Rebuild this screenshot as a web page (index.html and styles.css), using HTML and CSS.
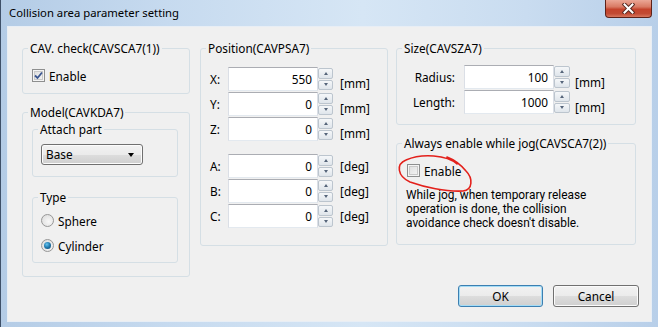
FILE: index.html
```html
<!DOCTYPE html>
<html lang="en">

<head>
    <meta charset="UTF-8">
    <title>Collision area parameter setting</title>
    <link rel="stylesheet" href="styles.css">
</head>

<body>
    <div class="window">
        <div class="titlebar">
            <span class="title">Collision area parameter setting</span>
            <div class="close-btn">
                <svg width="13" height="11" viewBox="0 0 13 11">
                    <path d="M2.5 1.5 L10.5 9.5 M10.5 1.5 L2.5 9.5" stroke="#5a2a22" stroke-width="4" stroke-linecap="square"/>
                    <path d="M2.5 1.5 L10.5 9.5 M10.5 1.5 L2.5 9.5" stroke="#ffffff" stroke-width="2" stroke-linecap="square"/>
                </svg>
            </div>
        </div>

        <div class="frame">
            <div class="client">
                <div class="columns">
                    <div class="col col-left">
                        <fieldset class="group group-cav">
                            <legend>CAV. check(CAVSCA7(1))</legend>
                            <label class="check">
                                <span class="checkbox">
                                    <svg width="9" height="9" viewBox="0 0 9 9">
                                        <path d="M1 4.5 L3.5 7 L8 1.5" fill="none" stroke="#3b5690" stroke-width="1.8"/>
                                    </svg>
                                </span>
                                Enable
                            </label>
                        </fieldset>

                        <fieldset class="group group-model">
                            <legend>Model(CAVKDA7)</legend>
                            <fieldset class="group group-attach">
                                <legend>Attach part</legend>
                                <div class="combo">Base<span class="combo-arrow"></span></div>
                            </fieldset>
                            <fieldset class="group group-type">
                                <legend>Type</legend>
                                <label class="radio-row"><span class="radio"></span>Sphere</label>
                                <label class="radio-row"><span class="radio checked"></span>Cylinder</label>
                            </fieldset>
                        </fieldset>
                    </div>

                    <div class="col col-mid">
                        <fieldset class="group group-pos">
                            <legend>Position(CAVPSA7)</legend>
                            <div class="rows">
                                <div class="row"><span class="axis">X:</span><span class="field">550</span><span class="spin"><span class="spin-btn"><i class="up"></i></span><span class="spin-btn"><i class="down"></i></span></span><span class="unit low">[mm]</span></div>
                                <div class="row"><span class="axis">Y:</span><span class="field">0</span><span class="spin"><span class="spin-btn"><i class="up"></i></span><span class="spin-btn"><i class="down"></i></span></span><span class="unit low">[mm]</span></div>
                                <div class="row"><span class="axis">Z:</span><span class="field">0</span><span class="spin"><span class="spin-btn"><i class="up"></i></span><span class="spin-btn"><i class="down"></i></span></span><span class="unit low">[mm]</span></div>
                            </div>
                            <div class="rows rows-angle">
                                <div class="row"><span class="axis">A:</span><span class="field">0</span><span class="spin"><span class="spin-btn"><i class="up"></i></span><span class="spin-btn"><i class="down"></i></span></span><span class="unit">[deg]</span></div>
                                <div class="row"><span class="axis">B:</span><span class="field">0</span><span class="spin"><span class="spin-btn"><i class="up"></i></span><span class="spin-btn"><i class="down"></i></span></span><span class="unit">[deg]</span></div>
                                <div class="row"><span class="axis">C:</span><span class="field">0</span><span class="spin"><span class="spin-btn"><i class="up"></i></span><span class="spin-btn"><i class="down"></i></span></span><span class="unit">[deg]</span></div>
                            </div>
                        </fieldset>
                    </div>

                    <div class="col col-right">
                        <fieldset class="group group-size">
                            <legend>Size(CAVSZA7)</legend>
                            <div class="rows rows-size">
                                <div class="row"><span class="name">Radius:</span><span class="field">100</span><span class="spin"><span class="spin-btn"><i class="up"></i></span><span class="spin-btn"><i class="down"></i></span></span><span class="unit lower">[mm]</span></div>
                                <div class="row"><span class="name">Length:</span><span class="field">1000</span><span class="spin"><span class="spin-btn"><i class="up"></i></span><span class="spin-btn"><i class="down"></i></span></span><span class="unit lower">[mm]</span></div>
                            </div>
                        </fieldset>

                        <fieldset class="group group-always">
                            <legend>Always enable while jog(CAVSCA7(2))</legend>
                            <label class="check"><span class="checkbox"></span>Enable</label>
                            <p class="desc">While jog, when temporary release<br>operation is done, the collision<br>avoidance check doesn't disable.</p>
                        </fieldset>
                    </div>
                </div>

                <div class="buttons">
                    <button class="btn btn-default">OK</button>
                    <button class="btn">Cancel</button>
                </div>
            </div>
        </div>

        <!-- red marker drawn over the dialog -->
        <svg class="scribble" width="90" height="50" viewBox="0 0 90 50">
            <path d="M66 14 C56 5, 31 3, 15 10 C5 14, 6 26, 19 32 C33 37, 55 42, 72 41 C82 40, 82 28, 75 21 C70 15, 64 10, 56 7" fill="none" stroke="#e3201b" stroke-width="1.6" stroke-linecap="round"/>
        </svg>
    </div>
</body>

</html>
```

FILE: styles.css
```css
body {
    margin: 0;
    font-family: "Noto Sans", "Open Sans", sans-serif;
    font-size: 11.8px;
    color: #000;
    background: #fff;
}

.window {
    position: relative;
    width: 658px;
    height: 327px;
    box-sizing: border-box;
    display: flex;
    flex-direction: column;
    overflow: hidden;
    border-left: 1px solid #3e5068;
    background: linear-gradient(to right, #b4cce6 0%, #c6daef 25%, #d6e6f5 55%, #c9dcf0 80%, #b8cfe9 100%);
}

.titlebar {
    height: 27px;
    display: flex;
    align-items: flex-start;
    flex-shrink: 0;
}

.title {
    padding: 6px 0 0 8px;
    font-size: 11.3px;
    line-height: 14px;
}

.close-btn {
    margin-left: auto;
    margin-right: 6px;
    width: 47px;
    height: 18px;
    box-sizing: border-box;
    display: flex;
    align-items: center;
    justify-content: center;
    border: 1px solid #5d2118;
    border-top: none;
    border-radius: 0 0 4px 4px;
    background: linear-gradient(#eba796 0%, #d97a64 40%, #c4432c 55%, #c24a33 80%, #d7765d 100%);
}

.frame {
    flex: 1;
    display: flex;
    padding: 0 7px 6px 7px;
}

.client {
    flex: 1;
    display: flex;
    flex-direction: column;
    padding: 14px 14px 14px 14px;
    background: #f0f0f0;
    box-shadow: 0 0 0 1px #e8eef5;
}

.columns {
    display: flex;
}

.col {
    display: flex;
    flex-direction: column;
}

.col-left {
    width: 168px;
    margin-right: 10px;
}

.col-mid {
    width: 188px;
    margin-right: 8px;
}

.col-right {
    width: 240px;
}

.group {
    margin: 0;
    padding: 0;
    min-width: 0;
    box-sizing: border-box;
    border: 1px solid #d5dfe5;
    border-radius: 3px;
}

.group legend {
    margin-left: 5px;
    padding: 0 2px;
    line-height: 15px;
}

.group-cav {
    height: 53px;
}

.group-model {
    height: 172px;
    margin-top: 11px;
}

.group-attach {
    width: 146px;
    height: 55px;
    margin: 2px 0 0 9px;
}

.group-type {
    width: 146px;
    height: 73px;
    margin: 13px 0 0 9px;
}

.group-pos {
    height: 205px;
}

.group-size {
    height: 84px;
}

.group-always {
    height: 109px;
    margin-top: 11px;
}

/* checkbox */
.check {
    display: flex;
    align-items: center;
    gap: 4px;
    height: 13px;
    margin: 13px 0 0 9px;
}

.group-always .check {
    margin-left: 10px;
}

.checkbox {
    width: 13px;
    height: 13px;
    box-sizing: border-box;
    display: flex;
    align-items: center;
    justify-content: center;
    border: 1px solid #8e8f8f;
    background: linear-gradient(135deg, #dcdcdc, #f6f6f6);
    box-shadow: inset 0 0 0 1px #f4f4f4, inset 0 0 0 2px #c9c9c9;
}

/* combo */
.combo {
    position: relative;
    width: 102px;
    height: 21px;
    box-sizing: border-box;
    margin: 7px 0 0 8px;
    padding-left: 4px;
    line-height: 19px;
    border: 1px solid #707070;
    border-radius: 3px;
    background: linear-gradient(#f2f2f2 0%, #ebebeb 50%, #dddddd 51%, #cfcfcf 100%);
    box-shadow: inset 0 0 0 1px #fcfcfc;
}

.combo-arrow {
    position: absolute;
    right: 8px;
    top: 8px;
    border-left: 3.5px solid transparent;
    border-right: 3.5px solid transparent;
    border-top: 4px solid #000;
}

/* radio */
.radio-row {
    display: flex;
    align-items: center;
    gap: 4px;
    height: 13px;
    margin: 12px 0 0 8px;
}

.radio-row:first-of-type {
    margin-top: 9px;
}

.radio {
    width: 13px;
    height: 13px;
    box-sizing: border-box;
    border-radius: 50%;
    border: 1px solid #979797;
    background: radial-gradient(circle at 60% 60%, #f8f8f8 0%, #d8d8d8 100%);
    display: flex;
    align-items: center;
    justify-content: center;
}

.radio.checked::after {
    content: "";
    width: 7px;
    height: 7px;
    border-radius: 50%;
    background: radial-gradient(circle at 40% 35%, #66c4ef 0%, #1f78ad 50%, #0d3f66 100%);
}

/* numeric rows */
.rows {
    display: flex;
    flex-direction: column;
    gap: 1px;
    margin: 11px 0 0 9px;
}

.rows-angle {
    margin-top: 13px;
}

.rows-size {
    margin: 9px 0 0 0;
}

.row {
    display: flex;
    align-items: center;
    height: 24px;
}

.axis {
    width: 18px;
}

.name {
    width: 58px;
    margin-right: 9px;
    text-align: right;
}

.field {
    width: 90px;
    height: 24px;
    box-sizing: border-box;
    padding-right: 5px;
    text-align: right;
    line-height: 22px;
    background: #fff;
    border: 1px solid #dbdfe6;
    border-top-color: #abadb3;
    border-bottom-color: #e3e9ef;
}

.spin {
    width: 15px;
    height: 24px;
    display: flex;
    flex-direction: column;
    gap: 1px;
    padding: 1px 0;
    box-sizing: border-box;
}

.rows-size .spin {
    width: 16px;
}

.spin-btn {
    flex: 1;
    display: flex;
    align-items: center;
    justify-content: center;
    border: 1px solid #bcc5ce;
    border-radius: 2px;
    background: linear-gradient(#f5f7f9, #dfe5eb);
}

.spin-btn .up {
    border-left: 2.5px solid transparent;
    border-right: 2.5px solid transparent;
    border-bottom: 3px solid #56657a;
}

.spin-btn .down {
    border-left: 2.5px solid transparent;
    border-right: 2.5px solid transparent;
    border-top: 3px solid #56657a;
}

.unit {
    margin-left: 7px;
}

.unit.low {
    padding-top: 7px;
}

.unit.lower {
    margin-left: 5px;
    padding-top: 10px;
}

.desc {
    margin: 11px 0 0 9px;
    font-family: Roboto, "Noto Sans", sans-serif;
    font-size: 11.9px;
    line-height: 14px;
}

/* buttons */
.buttons {
    margin-top: auto;
    margin-right: -2px;
    display: flex;
    justify-content: flex-end;
    gap: 10px;
}

.btn {
    width: 85px;
    height: 22px;
    padding: 0;
    font-family: inherit;
    font-size: inherit;
    color: #000;
    border: 1px solid #707070;
    border-radius: 3px;
    background: linear-gradient(#f2f2f2 0%, #ebebeb 50%, #dddddd 51%, #cfcfcf 100%);
    box-shadow: inset 0 0 0 1px #fbfbfb;
}

.btn + .btn {
    width: 86px;
}

.btn-default {
    border-color: #3c7fb1;
    box-shadow: inset 0 0 0 1px #a4dcf6;
}

.scribble {
    position: absolute;
    left: 390px;
    top: 150px;
}
```
